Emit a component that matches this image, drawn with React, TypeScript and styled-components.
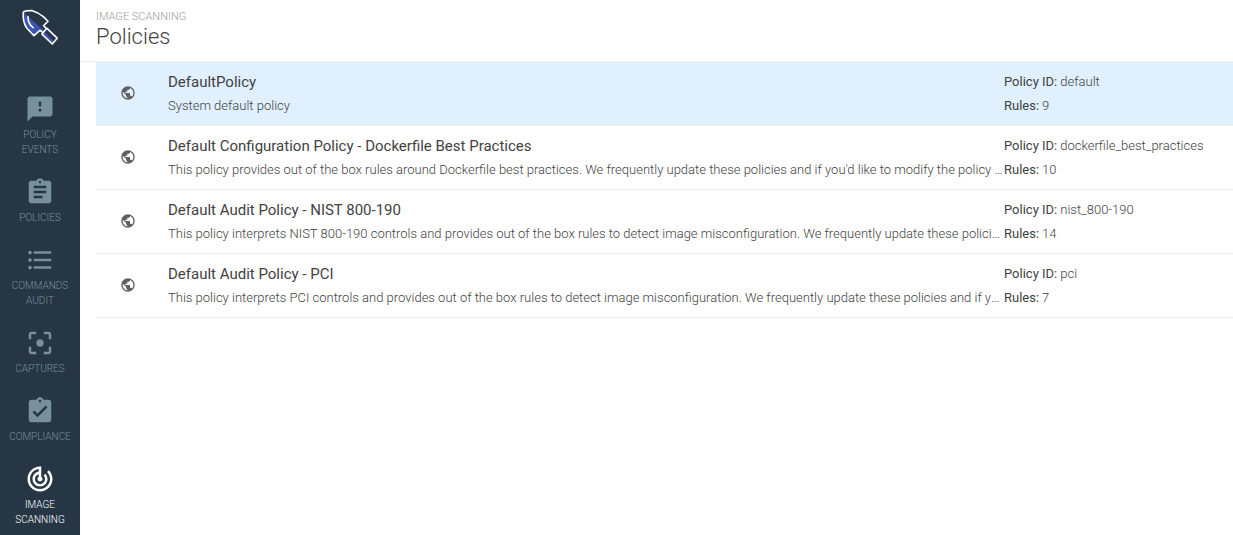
import React from 'react';
import styled, { createGlobalStyle } from 'styled-components';

const GlobalStyle = createGlobalStyle`
  *, *::before, *::after { box-sizing: border-box; }
  body {
    margin: 0;
    background: #fff;
    color: #424242;
    font-family: Roboto, "Liberation Sans", sans-serif;
    font-size: 13px;
    font-weight: 300;
  }
`;

const Page = styled.div`
  display: flex;
  min-height: 100vh;
`;

const Sidebar = styled.nav`
  flex: 0 0 80px;
  display: flex;
  flex-direction: column;
  gap: 4px;
  height: 100vh;
  overflow: hidden;
  background: #263645;
`;

const LogoLink = styled.a`
  display: flex;
  justify-content: center;
  flex: none;
  height: 82px;
  padding-top: 8px;
`;

const NavLink = styled.a<{ $active?: boolean }>`
  display: flex;
  flex-direction: column;
  align-items: center;
  flex: none;
  padding: 8px 4px;
  color: ${p => (p.$active ? '#ffffff' : '#78909c')};
  text-decoration: none;

  svg { fill: currentColor; }
`;

const NavLabel = styled.span`
  width: 64px;
  margin-top: 3px;
  font-size: 10px;
  line-height: 15px;
  text-align: center;
  text-transform: uppercase;
`;

const Main = styled.main`
  flex: 1;
  min-width: 0;
`;

const Header = styled.header`
  height: 62px;
  padding: 10px 16px 0;
  border-bottom: 1px solid #eeeeee;
`;

const Eyebrow = styled.div`
  color: #9e9e9e;
  font-size: 11px;
  line-height: 13px;
  text-transform: uppercase;
`;

const Title = styled.h1`
  margin: 0;
  font-size: 22px;
  font-weight: 300;
  line-height: 27px;
`;

const PolicyList = styled.ul`
  margin: 0;
  padding: 0 0 0 16px;
  list-style: none;
`;

const PolicyRow = styled.li<{ $selected?: boolean }>`
  display: flex;
  align-items: center;
  height: 64px;
  border-bottom: 1px solid #eeeeee;
  background: ${p => (p.$selected ? '#e0f0ff' : 'transparent')};
`;

const RowIcon = styled.div`
  display: flex;
  justify-content: center;
  flex: 0 0 64px;
  padding-bottom: 1px;

  svg { fill: #616161; }
`;

const Summary = styled.div`
  flex: 1;
  min-width: 0;
  padding-left: 8px;
`;

const Name = styled.div`
  font-size: 15px;
  font-weight: 400;
  line-height: 24px;
`;

const Description = styled.div`
  overflow: hidden;
  font-size: 13px;
  line-height: 24px;
  text-overflow: ellipsis;
  white-space: nowrap;
`;

const Details = styled.dl`
  flex: 0 0 229px;
  margin: 0;
`;

const Detail = styled.div`
  display: flex;
  gap: 3px;
  line-height: 24px;

  dt { font-weight: 400; }
  dd { margin: 0; }
`;

const Icon = ({ path, size = 30 }: { path: string; size?: number }) => (
  <svg width={size} height={size} viewBox="0 0 24 24" aria-hidden="true">
    <path d={path} />
  </svg>
);

const Logo = () => (
  <svg width="40" height="40" viewBox="0 0 40 40" aria-hidden="true">
    <path d="M3 4L24.5 23L22.7 24.7L20 22.3L14 28L6.7 20Q3 14 3 4Z" fill="#3b55b0" />
    <path d="M24 23.5L34.5 34L32.3 36.3L21.7 26.3Z" fill="#3b55b0" />
    <path
      d="M23.2 24.8L20 22.3L14 27.7L6.7 20Q2.6 14 3.2 4.2Q5 2.4 11.7 2.6Q18 4.5 23.3 8.6L28 13.2L23.6 17.6L26 20.2"
      fill="none"
      stroke="#ffffff"
      strokeWidth="1.6"
      strokeLinejoin="round"
    />
    <path
      d="M26.7 20.2L37.2 30.2L32.3 36L21.9 26.2Z"
      fill="none"
      stroke="#ffffff"
      strokeWidth="1.6"
      strokeLinejoin="round"
    />
    <path
      d="M8 8.5Q7.6 15.5 13.2 19.6"
      fill="none"
      stroke="#ffffff"
      strokeWidth="1.6"
      strokeLinecap="round"
    />
  </svg>
);

const PUBLIC =
  'M12 2C6.48 2 2 6.48 2 12s4.48 10 10 10 10-4.48 10-10S17.52 2 12 2zm-1 17.93c-3.95-.49-7-3.85-7-7.93 0-.62.08-1.21.21-1.79L9 15v1c0 1.1.9 2 2 2v1.93zm6.9-2.54c-.26-.81-1-1.39-1.9-1.39h-1v-3c0-.55-.45-1-1-1H8v-2h2c.55 0 1-.45 1-1V7h2c1.1 0 2-.9 2-2v-.41c2.93 1.19 5 4.06 5 7.41 0 2.08-.8 3.97-2.1 5.39z';

const navItems = [
  {
    label: 'Policy Events',
    path: 'M20 2H4c-1.1 0-1.99.9-1.99 2L2 22l4-4h14c1.1 0 2-.9 2-2V4c0-1.1-.9-2-2-2zm-7 12h-2v-2h2v2zm0-4h-2V6h2v4z',
  },
  {
    label: 'Policies',
    path: 'M19 3h-4.18C14.4 1.84 13.3 1 12 1c-1.3 0-2.4.84-2.82 2H5c-1.1 0-2 .9-2 2v14c0 1.1.9 2 2 2h14c1.1 0 2-.9 2-2V5c0-1.1-.9-2-2-2zm-7 0c.55 0 1 .45 1 1s-.45 1-1 1-1-.45-1-1 .45-1 1-1zm2 14H7v-2h7v2zm3-4H7v-2h10v2zm0-4H7V7h10v2z',
  },
  {
    label: 'Commands Audit',
    path: 'M4 10.5c-.83 0-1.5.67-1.5 1.5s.67 1.5 1.5 1.5 1.5-.67 1.5-1.5-.67-1.5-1.5-1.5zm0-6c-.83 0-1.5.67-1.5 1.5S3.17 7.5 4 7.5 5.5 6.83 5.5 6 4.83 4.5 4 4.5zm0 12c-.83 0-1.5.68-1.5 1.5s.68 1.5 1.5 1.5 1.5-.68 1.5-1.5-.67-1.5-1.5-1.5zM7 19h14v-2H7v2zm0-6h14v-2H7v2zm0-8v2h14V5H7z',
  },
  {
    label: 'Captures',
    path: 'M5 15H3v4c0 1.1.9 2 2 2h4v-2H5v-4zM5 5h4V3H5c-1.1 0-2 .9-2 2v4h2V5zm14-2h-4v2h4v4h2V5c0-1.1-.9-2-2-2zm0 16h-4v2h4c1.1 0 2-.9 2-2v-4h-2v4zM12 9c-1.66 0-3 1.34-3 3s1.34 3 3 3 3-1.34 3-3-1.34-3-3-3z',
  },
  {
    label: 'Compliance',
    path: 'M19 3h-4.18C14.4 1.84 13.3 1 12 1c-1.3 0-2.4.84-2.82 2H5c-1.1 0-2 .9-2 2v14c0 1.1.9 2 2 2h14c1.1 0 2-.9 2-2V5c0-1.1-.9-2-2-2zm-7 0c.55 0 1 .45 1 1s-.45 1-1 1-1-.45-1-1 .45-1 1-1zm-2 14l-4-4 1.41-1.41L10 14.17l6.59-6.59L18 9l-8 8z',
  },
  {
    label: 'Image Scanning',
    active: true,
    path: 'M19.07 4.93l-1.41 1.41C19.1 7.79 20 9.79 20 12c0 4.42-3.58 8-8 8s-8-3.58-8-8c0-4.08 3.05-7.44 7-7.93v2.02C8.16 6.57 6 9.03 6 12c0 3.31 2.69 6 6 6s6-2.69 6-6c0-1.66-.67-3.16-1.76-4.24l-1.41 1.41C15.55 9.9 16 10.9 16 12c0 2.21-1.79 4-4 4s-4-1.79-4-4c0-1.86 1.28-3.41 3-3.86v2.14c-.6.35-1 .98-1 1.72 0 1.1.9 2 2 2s2-.9 2-2c0-.74-.4-1.38-1-1.72V2h-1C6.48 2 2 6.48 2 12s4.48 10 10 10 10-4.48 10-10c0-2.76-1.12-5.26-2.93-7.07z',
  },
];

const policies = [
  {
    id: 'default',
    name: 'DefaultPolicy',
    description: 'System default policy',
    rules: 9,
  },
  {
    id: 'dockerfile_best_practices',
    name: 'Default Configuration Policy - Dockerfile Best Practices',
    description:
      "This policy provides out of the box rules around Dockerfile best practices. We frequently update these policies and if you'd like to modify the policy we suggest making a copy.",
    rules: 10,
  },
  {
    id: 'nist_800-190',
    name: 'Default Audit Policy - NIST 800-190',
    description:
      "This policy interprets NIST 800-190 controls and provides out of the box rules to detect image misconfiguration. We frequently update these policies and if you'd like to modify the policy we suggest making a copy.",
    rules: 14,
  },
  {
    id: 'pci',
    name: 'Default Audit Policy - PCI',
    description:
      "This policy interprets PCI controls and provides out of the box rules to detect image misconfiguration. We frequently update these policies and if you'd like to modify the policy we suggest making a copy.",
    rules: 7,
  },
];

export default function App() {
  return (
    <Page>
      <GlobalStyle />
      <Sidebar aria-label="Main">
        <LogoLink href="#home" aria-label="Home">
          <Logo />
        </LogoLink>
        {navItems.map(item => (
          <NavLink key={item.label} href="#nav" $active={item.active}>
            <Icon path={item.path} />
            <NavLabel>{item.label}</NavLabel>
          </NavLink>
        ))}
      </Sidebar>
      <Main>
        <Header>
          <Eyebrow>Image Scanning</Eyebrow>
          <Title>Policies</Title>
        </Header>
        <PolicyList>
          {policies.map((policy, index) => (
            <PolicyRow key={policy.id} $selected={index === 0}>
              <RowIcon>
                <Icon path={PUBLIC} size={16} />
              </RowIcon>
              <Summary>
                <Name>{policy.name}</Name>
                <Description>{policy.description}</Description>
              </Summary>
              <Details>
                <Detail>
                  <dt>Policy ID:</dt>
                  <dd>{policy.id}</dd>
                </Detail>
                <Detail>
                  <dt>Rules:</dt>
                  <dd>{policy.rules}</dd>
                </Detail>
              </Details>
            </PolicyRow>
          ))}
        </PolicyList>
      </Main>
    </Page>
  );
}
